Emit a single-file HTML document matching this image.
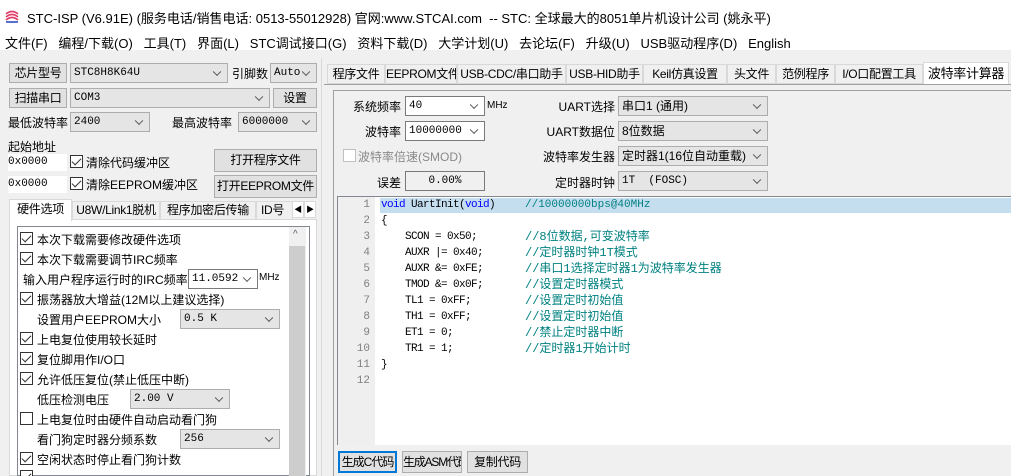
<!DOCTYPE html><html><head><meta charset="utf-8"><style>
*{margin:0;padding:0;box-sizing:border-box}
html,body{width:1011px;height:476px;overflow:hidden}
body{background:#f0f0f0;font-family:"Liberation Sans","Noto Sans CJK SC",sans-serif;font-size:12px;color:#000;position:relative}
.a{position:absolute;white-space:nowrap}
.btn{position:absolute;background:#e1e1e1;border:1px solid #adadad;text-align:center;font-size:12px;white-space:nowrap;overflow:hidden;letter-spacing:-0.3px}
.cb{position:absolute;background:#e5e5e5;border:1px solid #adadad;font-family:"Liberation Mono","Noto Sans CJK SC",monospace;font-size:11px;padding-left:3px;white-space:nowrap}
.cb.w{background:#fff;border-color:#7a7a7a}
.cb:after{content:"";position:absolute;right:7px;top:50%;width:5px;height:5px;border-right:1px solid #555;border-bottom:1px solid #555;transform:translateY(-70%) rotate(45deg)}
.ed{position:absolute;background:#fff;font-family:"Liberation Mono",monospace;font-size:11px;white-space:nowrap}
.ck{position:absolute;width:13px;height:13px;border:1px solid #333;background:#fff}
.ck.on:after{content:"";position:absolute;left:3px;top:0px;width:4px;height:8px;border-right:1.5px solid #333;border-bottom:1.5px solid #333;transform:rotate(45deg)}
.tab{position:absolute;border:1px solid #d9d9d9;background:#f0f0f0;font-size:12px;text-align:center;white-space:nowrap;overflow:hidden;letter-spacing:-0.3px}
.code{font-family:"Liberation Mono","Noto Sans CJK SC",monospace;font-size:11px;letter-spacing:-0.6px}
.ln{position:absolute;left:0;height:16px;line-height:16px;white-space:pre}
.cm{position:absolute;left:144px;top:0;color:#008080;font-size:12px;line-height:16px;letter-spacing:0}
.kw{color:#0000ff}
</style></head><body>
<div class="a" style="left:0;top:0;width:1011px;height:50px;background:#fff"></div>
<svg class="a" style="left:5px;top:9px" width="14" height="14"><path d="M1 5 Q7 0 13 5 M1 8 Q7 3 13 8 M1 11 Q7 6 13 11" stroke="#e0406a" stroke-width="1.6" fill="none"/><path d="M1 13 L13 13" stroke="#2040c0" stroke-width="1.5"/></svg>
<div class="a" style="left:27px;top:8px;font-size:13px">STC-ISP (V6.91E) (服务电话/销售电话: 0513-55012928) 官网:www.STCAI.com&nbsp; -- STC: 全球最大的8051单片机设计公司 (姚永平)</div>
<div class="a" style="left:5px;top:33px;font-size:13px">文件(F)&nbsp;&nbsp;&nbsp;编程/下载(O)&nbsp;&nbsp;&nbsp;工具(T)&nbsp;&nbsp;&nbsp;界面(L)&nbsp;&nbsp;&nbsp;STC调试接口(G)&nbsp;&nbsp;&nbsp;资料下载(D)&nbsp;&nbsp;&nbsp;大学计划(U)&nbsp;&nbsp;&nbsp;去论坛(F)&nbsp;&nbsp;&nbsp;升级(U)&nbsp;&nbsp;&nbsp;USB驱动程序(D)&nbsp;&nbsp;&nbsp;English</div>

<div class="btn" style="left:9px;top:63px;width:58px;height:20px;line-height:18px">芯片型号</div>
<div class="cb" style="left:70px;top:63px;width:158px;height:20px;line-height:18px">STC8H8K64U</div>
<div class="a" style="left:232px;top:65px">引脚数</div>
<div class="cb" style="left:270px;top:63px;width:47px;height:20px;line-height:18px">Auto</div>
<div class="btn" style="left:9px;top:88px;width:58px;height:20px;line-height:18px">扫描串口</div>
<div class="cb" style="left:70px;top:88px;width:200px;height:20px;line-height:18px">COM3</div>
<div class="btn" style="left:273px;top:88px;width:44px;height:20px;line-height:18px">设置</div>
<div class="a" style="left:8px;top:114px">最低波特率</div>
<div class="cb" style="left:70px;top:112px;width:80px;height:20px;line-height:18px">2400</div>
<div class="a" style="left:172px;top:114px">最高波特率</div>
<div class="cb" style="left:238px;top:112px;width:79px;height:20px;line-height:18px">6000000</div>
<div class="a" style="left:8px;top:138px">起始地址</div>
<div class="ed" style="left:8px;top:154px;width:59px;height:17px;line-height:17px">0x0000</div>
<div class="ck on" style="left:70px;top:155px"></div><div class="a" style="left:86px;top:154px">清除代码缓冲区</div>
<div class="btn" style="left:214px;top:149px;width:103px;height:23px;line-height:21px">打开程序文件</div>
<div class="ed" style="left:8px;top:176px;width:59px;height:17px;line-height:17px">0x0000</div>
<div class="ck on" style="left:70px;top:177px"></div><div class="a" style="left:86px;top:176px">清除EEPROM缓冲区</div>
<div class="btn" style="left:214px;top:175px;width:103px;height:23px;line-height:21px">打开EEPROM文件</div>
<div class="a" style="left:9px;top:219px;width:308px;height:257px;background:#fff;border:1px solid #d9d9d9"></div>
<div class="tab" style="left:72px;top:201px;width:88px;height:19px;line-height:17px">U8W/Link1脱机</div>
<div class="tab" style="left:160px;top:201px;width:96px;height:19px;line-height:17px">程序加密后传输</div>
<div class="tab" style="left:256px;top:201px;width:37px;height:19px;line-height:17px;text-align:left;padding-left:4px">ID号</div>
<div class="tab" style="left:292px;top:201px;width:12px;height:17px;background:#fff;font-size:8px;line-height:15px">◀</div>
<div class="tab" style="left:304px;top:201px;width:12px;height:17px;background:#fff;font-size:8px;line-height:15px">▶</div>
<div class="tab" style="left:9px;top:199px;width:63px;height:22px;line-height:19px;background:#fff;border-bottom:none">硬件选项</div>
<div class="a" style="left:17px;top:226px;width:293px;height:250px;border:1px solid #828790;background:#fff;overflow:hidden"></div>
<div class="a" style="left:289px;top:227px;width:17px;height:249px;background:#f0f0f0"></div>
<div class="a" style="left:289px;top:246px;width:16px;height:230px;background:#cdcdcd"></div>
<div class="a" style="left:293px;top:229px;font-size:10px;color:#606060">^</div>
<div class="ck on" style="left:20px;top:232px"></div><div class="a" style="left:37px;top:231px">本次下载需要修改硬件选项</div>
<div class="ck on" style="left:20px;top:252px"></div><div class="a" style="left:37px;top:251px">本次下载需要调节IRC频率</div>
<div class="a" style="left:23px;top:271px">输入用户程序运行时的IRC频率</div>
<div class="cb w" style="left:188px;top:269px;width:70px;height:20px;line-height:18px">11.0592</div>
<div class="a" style="left:259px;top:272px;font-size:10px">MHz</div>
<div class="ck on" style="left:20px;top:292px"></div><div class="a" style="left:37px;top:291px">振荡器放大增益(12M以上建议选择)</div>
<div class="a" style="left:37px;top:311px">设置用户EEPROM大小</div>
<div class="cb" style="left:180px;top:309px;width:100px;height:20px;line-height:18px">0.5 K</div>
<div class="ck on" style="left:20px;top:332px"></div><div class="a" style="left:37px;top:331px">上电复位使用较长延时</div>
<div class="ck on" style="left:20px;top:352px"></div><div class="a" style="left:37px;top:351px">复位脚用作I/O口</div>
<div class="ck on" style="left:20px;top:372px"></div><div class="a" style="left:37px;top:371px">允许低压复位(禁止低压中断)</div>
<div class="a" style="left:37px;top:391px">低压检测电压</div>
<div class="cb" style="left:130px;top:389px;width:100px;height:20px;line-height:18px">2.00 V</div>
<div class="ck" style="left:20px;top:412px"></div><div class="a" style="left:37px;top:411px">上电复位时由硬件自动启动看门狗</div>
<div class="a" style="left:37px;top:431px">看门狗定时器分频系数</div>
<div class="cb" style="left:180px;top:429px;width:100px;height:20px;line-height:18px">256</div>
<div class="ck on" style="left:20px;top:452px"></div><div class="a" style="left:37px;top:451px">空闲状态时停止看门狗计数</div>
<div class="ck on" style="left:20px;top:470px;height:6px;border-bottom:none"></div>
<div class="a" style="left:321px;top:58px;width:1px;height:418px;background:#d9d9d9"></div>

<div class="tab" style="left:327px;top:64px;width:58px;height:20px;line-height:18px">程序文件</div>
<div class="tab" style="left:385px;top:64px;width:72px;height:20px;line-height:18px">EEPROM文件</div>
<div class="tab" style="left:457px;top:64px;width:109px;height:20px;line-height:18px">USB-CDC/串口助手</div>
<div class="tab" style="left:566px;top:64px;width:77px;height:20px;line-height:18px">USB-HID助手</div>
<div class="tab" style="left:643px;top:64px;width:84px;height:20px;line-height:18px">Keil仿真设置</div>
<div class="tab" style="left:727px;top:64px;width:49px;height:20px;line-height:18px">头文件</div>
<div class="tab" style="left:776px;top:64px;width:59px;height:20px;line-height:18px">范例程序</div>
<div class="tab" style="left:835px;top:64px;width:88px;height:20px;line-height:18px">I/O口配置工具</div>
<div class="tab" style="left:923px;top:62px;width:86px;height:23px;line-height:21px;background:#fff;border-bottom:none;font-size:13px">波特率计算器</div>
<div class="a" style="left:324px;top:84px;width:687px;height:1px;background:#a0a0a0"></div>
<div class="a" style="left:333px;top:90px;width:678px;height:1px;background:#a0a0a0"></div>
<div class="a" style="left:333px;top:90px;width:1px;height:386px;background:#a0a0a0"></div>

<div class="a" style="left:343px;top:98px;width:58px;text-align:right">系统频率</div>
<div class="cb w" style="left:405px;top:96px;width:80px;height:20px;line-height:18px">40</div>
<div class="a" style="left:487px;top:100px;font-size:10px">MHz</div>
<div class="a" style="left:343px;top:123px;width:58px;text-align:right">波特率</div>
<div class="cb w" style="left:405px;top:121px;width:80px;height:20px;line-height:18px">10000000</div>
<div class="ck" style="left:343px;top:149px;border-color:#c0c0c0"></div><div class="a" style="left:358px;top:148px;color:#8a8a8a">波特率倍速(SMOD)</div>
<div class="a" style="left:343px;top:174px;width:58px;text-align:right">误差</div>
<div class="ed" style="left:405px;top:171px;width:80px;height:20px;line-height:18px;background:#f0f0f0;border:1px solid #7a7a7a;text-align:center">0.00%</div>

<div class="a" style="left:520px;top:98px;width:95px;text-align:right">UART选择</div>
<div class="cb" style="left:618px;top:96px;width:150px;height:20px;line-height:18px;font-family:'Liberation Sans','Noto Sans CJK SC',sans-serif;font-size:12px">串口1 (通用)</div>
<div class="a" style="left:520px;top:123px;width:95px;text-align:right">UART数据位</div>
<div class="cb" style="left:618px;top:121px;width:150px;height:20px;line-height:18px;font-family:'Liberation Sans','Noto Sans CJK SC',sans-serif;font-size:12px">8位数据</div>
<div class="a" style="left:520px;top:148px;width:95px;text-align:right">波特率发生器</div>
<div class="cb" style="left:618px;top:146px;width:150px;height:20px;line-height:18px;font-family:'Liberation Sans','Noto Sans CJK SC',sans-serif;font-size:12px">定时器1(16位自动重载)</div>
<div class="a" style="left:520px;top:174px;width:95px;text-align:right">定时器时钟</div>
<div class="cb" style="left:618px;top:171px;width:150px;height:20px;line-height:18px">1T &nbsp;(FOSC)</div>

<div class="a" style="left:337px;top:196px;width:674px;height:249px;background:#fff;border-left:1px solid #828790;border-top:1px solid #828790"></div>
<div class="a" style="left:338px;top:197px;width:37px;height:248px;background:#efefef"></div>
<div class="a" style="left:380px;top:198px;width:631px;height:15px;background:#c4def0"></div>
<div class="a code" style="left:338px;top:197px;width:32px;text-align:right;color:#808080;line-height:16px;letter-spacing:0">1<br>2<br>3<br>4<br>5<br>6<br>7<br>8<br>9<br>10<br>11<br>12</div>
<div class="a code" style="left:381px;top:197px;width:630px;height:200px">
<div class="ln" style="top:0"><span class="kw">void</span> UartInit(<span class="kw">void</span>)<span class="cm" style="font-size:11px">//10000000bps@40MHz</span></div>
<div class="ln" style="top:16px">{</div>
<div class="ln" style="top:32px">    SCON = 0x50;<span class="cm">//8位数据,可变波特率</span></div>
<div class="ln" style="top:48px">    AUXR |= 0x40;<span class="cm">//定时器时钟1T模式</span></div>
<div class="ln" style="top:64px">    AUXR &amp;= 0xFE;<span class="cm">//串口1选择定时器1为波特率发生器</span></div>
<div class="ln" style="top:80px">    TMOD &amp;= 0x0F;<span class="cm">//设置定时器模式</span></div>
<div class="ln" style="top:96px">    TL1 = 0xFF;<span class="cm">//设置定时初始值</span></div>
<div class="ln" style="top:112px">    TH1 = 0xFF;<span class="cm">//设置定时初始值</span></div>
<div class="ln" style="top:128px">    ET1 = 0;<span class="cm">//禁止定时器中断</span></div>
<div class="ln" style="top:144px">    TR1 = 1;<span class="cm">//定时器1开始计时</span></div>
<div class="ln" style="top:160px">}</div>
</div>
<div class="btn" style="left:338px;top:451px;width:59px;height:22px;line-height:18px;border:2px solid #0078d7;letter-spacing:-1px">生成C代码</div>
<div class="btn" style="left:402px;top:451px;width:60px;height:22px;line-height:20px;letter-spacing:-1.2px">生成ASM代码</div>
<div class="btn" style="left:467px;top:451px;width:61px;height:22px;line-height:20px">复制代码</div>
</body></html>
